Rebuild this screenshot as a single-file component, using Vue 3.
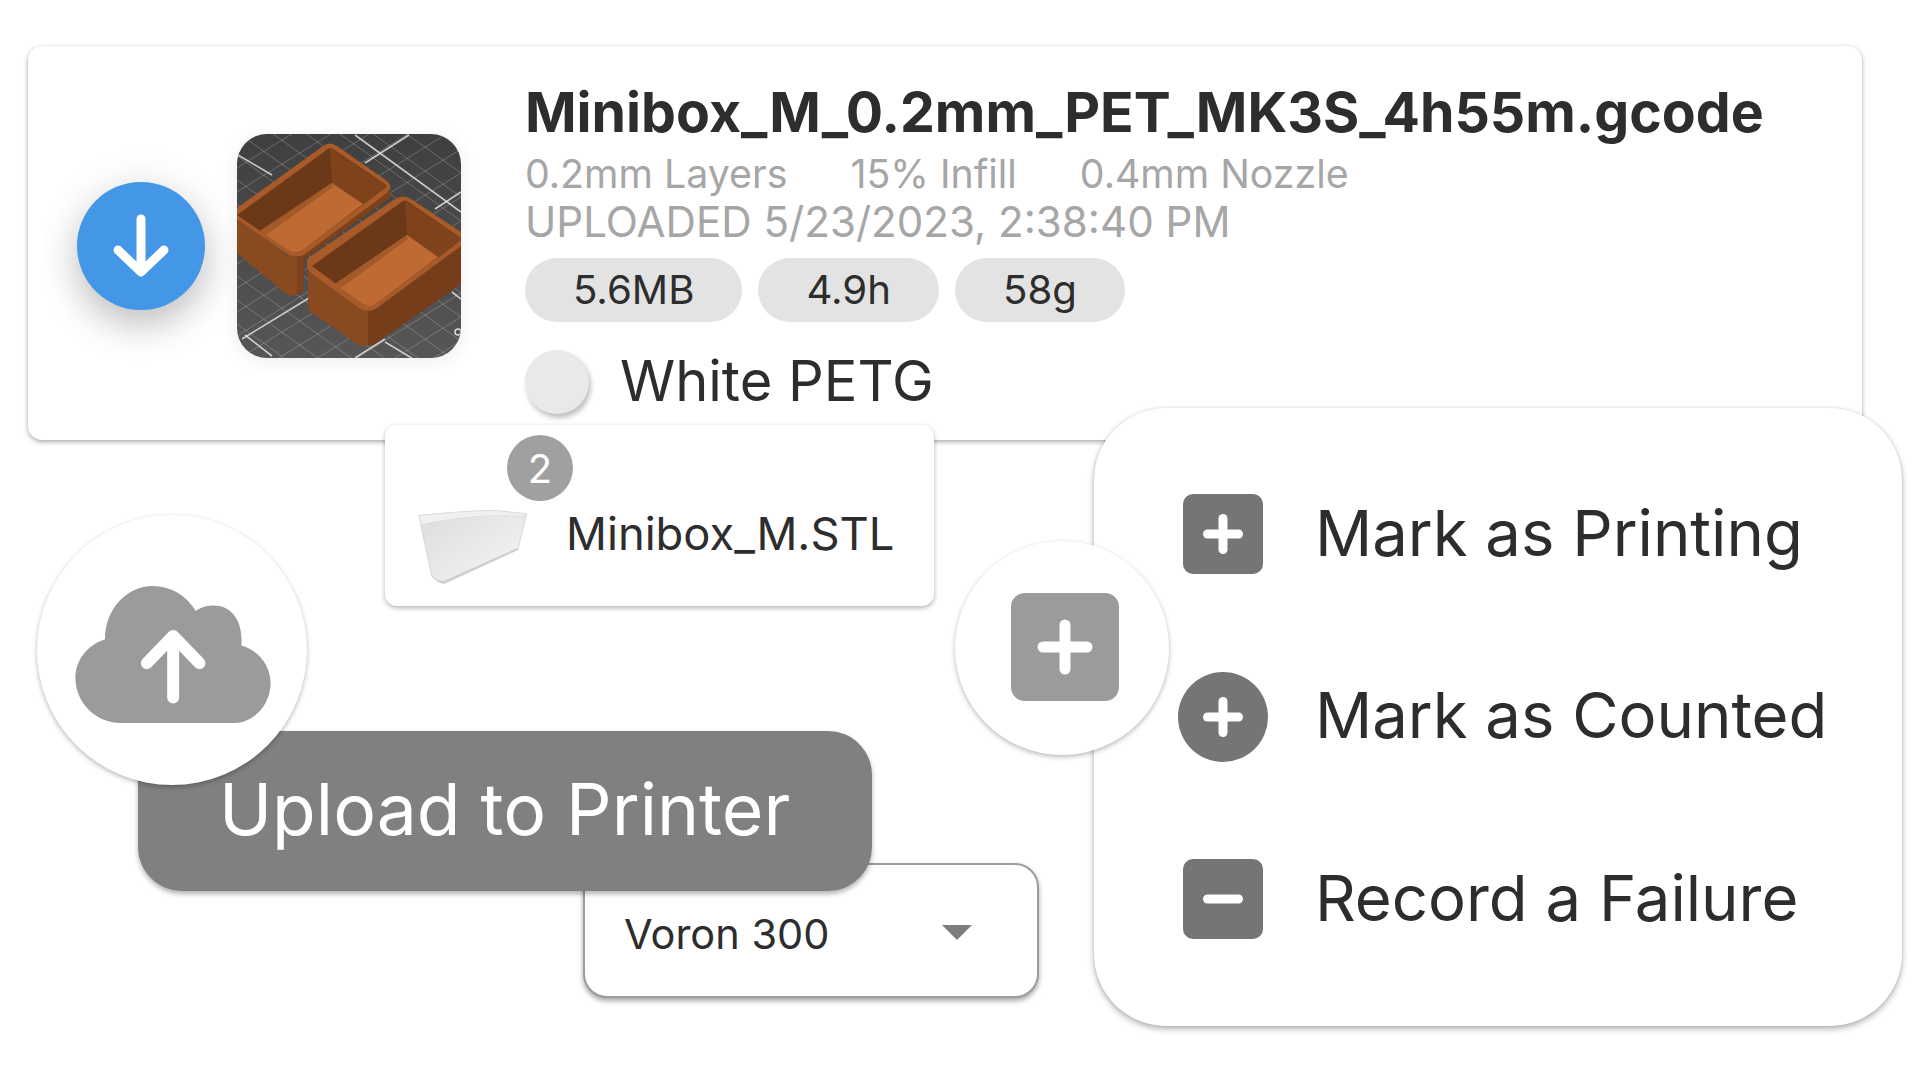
<template>
  <main class="canvas">
    <section class="file-card">
      <div class="download-btn">
        <svg width="56" height="64" viewBox="0 0 56 64" fill="none" stroke="#fff" stroke-width="9" stroke-linecap="round" stroke-linejoin="round">
          <path d="M28 5V57" />
          <path d="M5 36L28 58L51 36" />
        </svg>
      </div>
      <svg class="thumb" width="224" height="224" viewBox="0 0 224 224">
        <defs>
          <linearGradient id="bed" x1="0" y1="0" x2="0" y2="1">
            <stop offset="0" stop-color="#3f3f3f" />
            <stop offset="1" stop-color="#565656" />
          </linearGradient>
        </defs>
        <rect width="224" height="224" fill="url(#bed)" />
        <line v-for="(l, i) in minorLines" :key="'m' + i" :x1="l[0]" :y1="l[1]" :x2="l[2]" :y2="l[3]" stroke="#fff" stroke-opacity="0.22" stroke-width="1" />
        <line v-for="(l, i) in majorLines" :key="'j' + i" :x1="l[0]" :y1="l[1]" :x2="l[2]" :y2="l[3]" stroke="#e2e2e2" stroke-opacity="0.85" stroke-width="1.6" />

        <!-- left box -->
        <path d="M0 84L50 121L60 123V161Q54 163 48 159L0 119Z" fill="#8a4a20" />
        <path d="M60 123L154 56L153 64L68 124L66 158L60 161Z" fill="#7c411b" />
        <path d="M0 74L86 12Q93 7 100 12L150 47Q157 53 150 59L68 120Q60 125 50 120L0 85Z" fill="#a85a28" />
        <path d="M0 81L91 15Q93 13 96 15L148 50Q151 52 148 54L66 116Q60 120 52 117L0 81Z" fill="#6c3918" />
        <path d="M93 14L150 52L126 71L95 49Z" fill="#7f431c" />
        <path d="M95 49L126 70L66 116Q60 120 52 117L23 97Z" fill="#bf6a33" />
        <path d="M23 97L95 49L96 53L29 101Z" fill="#a35a29" />

        <!-- right box -->
        <path d="M71 134L131 178V211Q125 213 120 210L74 178Q71 176 71 170Z" fill="#8a4a20" />
        <path d="M131 176L224 110V150L138 210Q134 212 131 211Z" fill="#753d19" />
        <path d="M71 124L158 65Q166 60 174 65L224 98V112L140 174Q131 180 122 174L74 139Q68 134 71 124Z" fill="#a85a28" />
        <path d="M75 132L166 67Q168 66 170 67L224 104V106L139 170Q133 174 126 170Z" fill="#6c3918" />
        <path d="M168 67L224 104V106L201 124L170 101Z" fill="#7f431c" />
        <path d="M170 101L201 123L139 170Q133 174 126 170L98 150Z" fill="#bf6a33" />
        <path d="M98 150L170 101L171 105L104 154Z" fill="#a35a29" />

        <circle cx="221" cy="198" r="3" fill="none" stroke="#ddd" stroke-width="1.5" />
      </svg>

      <div class="file-info">
        <h1 class="file-name">Minibox_M_0.2mm_PET_MK3S_4h55m.gcode</h1>
        <p class="settings">
          <span>0.2mm Layers</span>
          <span>15% Infill</span>
          <span>0.4mm Nozzle</span>
        </p>
        <p class="uploaded">UPLOADED 5/23/2023, 2:38:40 PM</p>
        <div class="chips">
          <span v-for="chip in chips" :key="chip" class="chip">{{ chip }}</span>
        </div>
        <div class="material">
          <span class="swatch"></span>
          <span class="material-name">White PETG</span>
        </div>
      </div>
    </section>

    <section class="stl-card">
      <span class="badge">2</span>
      <svg width="112" height="75" viewBox="50 270 335 225">
        <defs>
          <linearGradient id="stl" x1="0" y1="0" x2="1" y2="1">
            <stop offset="0" stop-color="#dcdcdc" />
            <stop offset="1" stop-color="#f6f6f6" />
          </linearGradient>
        </defs>
        <path d="M55 290Q160 278 280 274L378 285L352 392L130 494Q112 492 94 472Z" fill="url(#stl)" stroke="#d6d6d6" stroke-width="3" stroke-linejoin="round" />
        <path d="M55 290Q160 278 280 274L378 285L372 292L280 290Q160 294 62 318Z" fill="#f0f0f0" stroke="#dadada" stroke-width="2" stroke-linejoin="round" />
        <path d="M94 472Q112 486 130 486L352 386L352 392L130 494Q112 492 94 472Z" fill="#cfcfcf" />
      </svg>
      <span class="stl-name">Minibox_M.STL</span>
    </section>

    <div class="cloud-circle">
      <svg class="cloud" width="197" height="138" viewBox="130 240 590 415">
        <path d="M270 655C190 655 133 590 133 520C133 465 170 420 222 403C222 310 290 243 365 243C420 243 465 270 495 318C515 305 530 302 550 302C600 302 638 345 632 422C680 435 720 480 720 535C720 600 670 655 610 655Z" fill="#9b9b9b" />
        <path d="M427 578V395M348 475L427 393L506 475" fill="none" stroke="#fff" stroke-width="36" stroke-linecap="round" stroke-linejoin="round" />
      </svg>
    </div>

    <button class="upload-btn" type="button">Upload to Printer</button>

    <div class="printer-select">
      <span>Voron 300</span>
      <span class="caret"></span>
    </div>

    <section class="action-menu">
      <div v-for="action in actions" :key="action.label" class="action">
        <span class="action-icon-wrap">
          <span class="action-icon" :class="{ round: action.round }">
            <svg width="40" height="40" viewBox="0 0 40 40" fill="none" stroke="#fff" stroke-width="9" stroke-linecap="round">
              <path d="M4.5 20H35.5" />
              <path v-if="action.plus" d="M20 4.5V35.5" />
            </svg>
          </span>
        </span>
        <span class="action-label">{{ action.label }}</span>
      </div>
    </section>

    <div class="plus-circle">
      <span class="plus-square">
        <svg width="56" height="56" viewBox="0 0 56 56" fill="none" stroke="#fff" stroke-width="11" stroke-linecap="round">
          <path d="M6 28H50" />
          <path d="M28 6V50" />
        </svg>
      </span>
    </div>
  </main>
</template>

<script setup>
const chips = ['5.6MB', '4.9h', '58g']

const actions = [
  { label: 'Mark as Printing', plus: true, round: false },
  { label: 'Mark as Counted', plus: true, round: true },
  { label: 'Record a Failure', plus: false, round: false }
]

// bed grid, two diagonal families
const minorLines = []
for (let c = -170; c < 224; c += 24) minorLines.push([0, c, 224, c + 161])
for (let c = 10; c < 370; c += 24) minorLines.push([0, c, 224, c - 139])

const majorLines = [
  [1, 21, 35, 41],
  [118, 1, 224, 78],
  [215, 158, 224, 165],
  [8, 201, 35, 222],
  [148, 208, 178, 226],
  [128, 29, 172, 1],
  [198, 75, 224, 58],
  [5, 205, 72, 164],
  [118, 224, 148, 205]
]
</script>

<style scoped>
.canvas {
  position: relative;
  width: 1920px;
  height: 1080px;
  overflow: hidden;
  background: #fff;
  color: #2d2d2d;
  font-family: Inter, "Liberation Sans", sans-serif;
}

p,
h1 {
  margin: 0;
}

.file-card {
  position: absolute;
  top: 46px;
  left: 28px;
  display: flex;
  box-sizing: border-box;
  width: 1834px;
  height: 394px;
  padding-left: 49px;
  border-radius: 14px;
  background: #fff;
  box-shadow: 0 2px 5px rgb(0 0 0 / 32%), 0 0 2px rgb(0 0 0 / 8%);
}

.download-btn {
  display: flex;
  flex: none;
  align-items: center;
  justify-content: center;
  width: 128px;
  height: 128px;
  margin-top: 136px;
  border-radius: 50%;
  background: #4496e6;
  box-shadow: 0 16px 36px rgb(0 0 0 / 22%), 0 0 50px rgb(0 0 0 / 6%);
}

.thumb {
  flex: none;
  margin: 88px 0 0 32px;
  border-radius: 30px;
  box-shadow: 0 3px 18px rgb(0 0 0 / 8%);
}

.file-info {
  margin-left: 64px;
  padding-top: 33px;
}

.file-name {
  font-size: 55.4px;
  font-weight: 700;
  line-height: 66px;
  white-space: nowrap;
}

.settings {
  display: flex;
  gap: 63px;
  margin-top: 5px;
  color: #a6a6a6;
  font-size: 39.3px;
  line-height: 48px;
}

.uploaded {
  color: #a6a6a6;
  font-size: 42.1px;
  line-height: 48px;
}

.chips {
  display: flex;
  gap: 16px;
  margin-top: 12px;
}

.chip {
  padding: 0 48px;
  border-radius: 32px;
  background: #e3e3e3;
  font-size: 40.2px;
  line-height: 64px;
}

.material {
  display: flex;
  gap: 31px;
  align-items: center;
  margin-top: 27px;
  font-size: 56px;
  line-height: 64px;
}

.material-name {
  padding-bottom: 2px;
}

.swatch {
  width: 64px;
  height: 64px;
  border-radius: 50%;
  background: #e9e9e9;
  box-shadow: 2px 4px 5px rgb(0 0 0 / 25%);
}

.stl-card {
  position: absolute;
  top: 425px;
  left: 385px;
  display: flex;
  gap: 37px;
  align-items: flex-start;
  box-sizing: border-box;
  width: 549px;
  height: 181px;
  padding: 84px 0 0 32px;
  border-radius: 12px;
  background: #fff;
  box-shadow: 0 2px 5px rgb(0 0 0 / 30%);
}

.badge {
  position: absolute;
  top: 10px;
  left: 122px;
  display: flex;
  align-items: center;
  justify-content: center;
  width: 66px;
  height: 66px;
  border-radius: 50%;
  background: #a0a0a0;
  color: #fff;
  font-size: 40px;
}

.stl-name {
  font-size: 45.3px;
  line-height: 50px;
}

.cloud-circle,
.plus-circle {
  position: absolute;
  z-index: 3;
  display: flex;
  align-items: center;
  justify-content: center;
  border-radius: 50%;
  background: #fff;
  box-shadow: 0 2px 5px rgb(0 0 0 / 28%);
}

.cloud-circle {
  top: 515px;
  left: 37px;
  width: 270px;
  height: 270px;
}

.cloud {
  margin-top: 8px;
}

.upload-btn {
  position: absolute;
  z-index: 2;
  top: 731px;
  left: 138px;
  width: 734px;
  height: 160px;
  padding: 0 0 4px 81px;
  border: 0;
  border-radius: 44px;
  background: #808080;
  box-shadow: 0 3px 5px rgb(0 0 0 / 30%);
  color: #fff;
  font-family: inherit;
  font-size: 71.4px;
  line-height: 156px;
  text-align: left;
}

.printer-select {
  position: absolute;
  top: 863px;
  left: 583px;
  display: flex;
  align-items: center;
  justify-content: space-between;
  box-sizing: border-box;
  width: 456px;
  height: 135px;
  padding: 7px 65px 0 39px;
  border: 2px solid #9c9c9c;
  border-radius: 24px;
  background: #fff;
  box-shadow: 0 3px 5px rgb(0 0 0 / 35%);
  font-size: 41.5px;
}

.caret {
  width: 0;
  height: 0;
  margin-bottom: 4px;
  border-top: 15px solid #7d7d7d;
  border-right: 15px solid transparent;
  border-left: 15px solid transparent;
}

.action-menu {
  position: absolute;
  z-index: 1;
  top: 408px;
  left: 1094px;
  box-sizing: border-box;
  width: 808px;
  height: 618px;
  padding: 35px 0 0 84px;
  border-radius: 72px;
  background: #fff;
  box-shadow: 0 3px 6px rgb(0 0 0 / 30%), 0 0 3px rgb(0 0 0 / 10%);
  font-size: 63.4px;
}

.action {
  display: flex;
  gap: 47px;
  align-items: center;
  height: 182.5px;
  white-space: nowrap;
}

.action-label {
  padding-bottom: 3px;
}

.action-icon-wrap {
  display: flex;
  flex: none;
  align-items: center;
  justify-content: center;
  width: 90px;
}

.action-icon {
  display: flex;
  align-items: center;
  justify-content: center;
  width: 80px;
  height: 80px;
  border-radius: 10px;
  background: #757575;
}

.action-icon.round {
  width: 90px;
  height: 90px;
  border-radius: 50%;
}

.plus-circle {
  top: 541px;
  left: 955px;
  width: 214px;
  height: 214px;
}

.plus-square {
  display: flex;
  align-items: center;
  justify-content: center;
  width: 108px;
  height: 108px;
  margin: -2px 0 0 6px;
  border-radius: 14px;
  background: #9b9b9b;
}
</style>
